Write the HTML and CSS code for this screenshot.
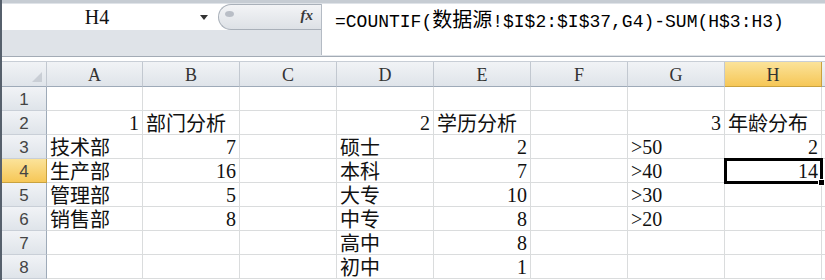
FILE: index.html
```html
<!DOCTYPE html>
<html lang="zh-CN">
<head>
  <meta charset="UTF-8" />
  <title>年龄分布</title>
  <link rel="stylesheet" href="styles.css">
</head>
<body>
  <div class="formula-bar">
    <div class="name-col">
      <div class="name-row">
        <div class="name-box">H4</div>
        <div class="drop"></div>
        <div class="handle"><span class="knob"></span><span class="fx">fx</span></div>
      </div>
    </div>
    <div class="formula">=COUNTIF(<span class="zh">数据源</span>!$I$2:$I$37,G4)-SUM(H$3:H3)</div>
  </div>

  <div class="sheet">
    <div class="corner"><span class="tri"></span></div>
    <div class="col-head">A</div>
    <div class="col-head">B</div>
    <div class="col-head">C</div>
    <div class="col-head">D</div>
    <div class="col-head">E</div>
    <div class="col-head">F</div>
    <div class="col-head">G</div>
    <div class="col-head active">H</div>
    <div class="col-head"></div>

    <div class="row-head">1</div>
    <div class="cell"></div><div class="cell"></div><div class="cell"></div><div class="cell"></div>
    <div class="cell"></div><div class="cell"></div><div class="cell"></div><div class="cell"></div><div class="cell"></div>

    <div class="row-head">2</div>
    <div class="cell num">1</div><div class="cell zh">部门分析</div><div class="cell"></div><div class="cell num">2</div>
    <div class="cell zh">学历分析</div><div class="cell"></div><div class="cell num">3</div><div class="cell zh">年龄分布</div><div class="cell"></div>

    <div class="row-head">3</div>
    <div class="cell zh">技术部</div><div class="cell num">7</div><div class="cell"></div><div class="cell zh">硕士</div>
    <div class="cell num">2</div><div class="cell"></div><div class="cell txt">&gt;50</div><div class="cell num">2</div><div class="cell"></div>

    <div class="row-head active">4</div>
    <div class="cell zh">生产部</div><div class="cell num">16</div><div class="cell"></div><div class="cell zh">本科</div>
    <div class="cell num">7</div><div class="cell"></div><div class="cell txt">&gt;40</div><div class="cell num selected">14</div><div class="cell"></div>

    <div class="row-head">5</div>
    <div class="cell zh">管理部</div><div class="cell num">5</div><div class="cell"></div><div class="cell zh">大专</div>
    <div class="cell num">10</div><div class="cell"></div><div class="cell txt">&gt;30</div><div class="cell"></div><div class="cell"></div>

    <div class="row-head">6</div>
    <div class="cell zh">销售部</div><div class="cell num">8</div><div class="cell"></div><div class="cell zh">中专</div>
    <div class="cell num">8</div><div class="cell"></div><div class="cell txt">&gt;20</div><div class="cell"></div><div class="cell"></div>

    <div class="row-head">7</div>
    <div class="cell"></div><div class="cell"></div><div class="cell"></div><div class="cell zh">高中</div>
    <div class="cell num">8</div><div class="cell"></div><div class="cell"></div><div class="cell"></div><div class="cell"></div>

    <div class="row-head">8</div>
    <div class="cell"></div><div class="cell"></div><div class="cell"></div><div class="cell zh">初中</div>
    <div class="cell num">1</div><div class="cell"></div><div class="cell"></div><div class="cell"></div><div class="cell"></div>
  </div>
</body>
</html>
```

FILE: styles.css
```css
body {
  margin: 0;
  width: 825px;
  height: 280px;
  overflow: hidden;
  background: #fff;
  border-left: 2px solid #56606c;
  box-sizing: border-box;
  font-family: "Liberation Serif", "Noto Sans CJK SC", serif;
}
.zh {
  font-family: "Noto Sans CJK SC", sans-serif;
  font-size: 20px;
}
.formula-bar {
  display: flex;
  height: 57px;
  background: #dfe3e8;
  border-top: 3px solid #c6ccd3;
  border-bottom: 1px solid #a3abb5;
  box-sizing: border-box;
}
.name-col {
  width: 319px;
  padding-top: 1px;
}
.name-row {
  display: flex;
  height: 26px;
  background: #fff;
}
.name-box {
  width: 190px;
  text-align: center;
  font-size: 20px;
  line-height: 27px;
  color: #111;
}
.drop {
  width: 26px;
  position: relative;
}
.drop::after {
  content: "";
  position: absolute;
  left: 8px;
  top: 11px;
  border-left: 4px solid transparent;
  border-right: 4px solid transparent;
  border-top: 5px solid #333;
}
.handle {
  flex: 1;
  position: relative;
  background: linear-gradient(#f3f4f6, #dde1e6);
  border: 1px solid #a9b0b9;
  border-right: none;
  border-radius: 13px 0 0 13px;
  box-sizing: border-box;
}
.knob {
  position: absolute;
  left: 6px;
  top: 6px;
  width: 9px;
  height: 6px;
  border-radius: 50%;
  background: #b9bec6;
}
.fx {
  position: absolute;
  right: 8px;
  top: 2px;
  font-family: "Liberation Serif", serif;
  font-style: italic;
  font-weight: bold;
  font-size: 15px;
  color: #3a3a3a;
}
.formula {
  flex: 1;
  margin-top: 1px;
  margin-bottom: 1px;
  background: #fff;
  border-left: 1px solid #b4bbc4;
  padding: 3px 0 0 13px;
  font-family: "Liberation Mono", "Noto Sans CJK SC", monospace;
  font-size: 18px;
  line-height: 24px;
  color: #000;
  white-space: nowrap;
}
.formula .zh {
  font-size: 20px;
}
.sheet {
  display: grid;
  grid-template-columns: 45px 96px repeat(7, 97px) 20px;
  grid-template-rows: 25px repeat(8, 24px);
  margin-top: 4px;
  border-top: 1px solid #c8ced6;
}
.corner, .col-head, .row-head {
  background: linear-gradient(#f1f3f6, #dfe4ea);
  border-right: 1px solid #c2c8d0;
  border-bottom: 1px solid #9eaab8;
  box-sizing: border-box;
  color: #333;
}
.corner {
  position: relative;
}
.tri {
  position: absolute;
  right: 4px;
  bottom: 4px;
  border-left: 10px solid transparent;
  border-bottom: 10px solid #c9ced5;
}
.col-head {
  text-align: center;
  font-size: 18px;
  line-height: 26px;
}
.row-head {
  text-align: center;
  font-family: "Liberation Sans", sans-serif;
  font-size: 17px;
  line-height: 25px;
  color: #444;
  border-bottom: 1px solid #c9cfd7;
  border-right: 1px solid #9eaab8;
}
.col-head.active, .row-head.active {
  background: linear-gradient(#fbe39a, #f6c757);
  border-right-color: #c9a23f;
  border-bottom-color: #c9a23f;
}
.cell {
  border-right: 1px solid #dadcdd;
  border-bottom: 1px solid #dadcdd;
  box-sizing: border-box;
  padding: 0 3px;
  font-size: 20px;
  line-height: 25px;
  color: #111;
  white-space: nowrap;
  overflow: visible;
}
.cell.num {
  text-align: right;
}
.cell.zh {
  line-height: 23px;
}
.selected {
  position: relative;
  outline: 3px solid #000;
  outline-offset: -2px;
}
.selected::after {
  content: "";
  position: absolute;
  right: -4px;
  bottom: -4px;
  width: 5px;
  height: 5px;
  background: #000;
  border: 1px solid #fff;
}
```
